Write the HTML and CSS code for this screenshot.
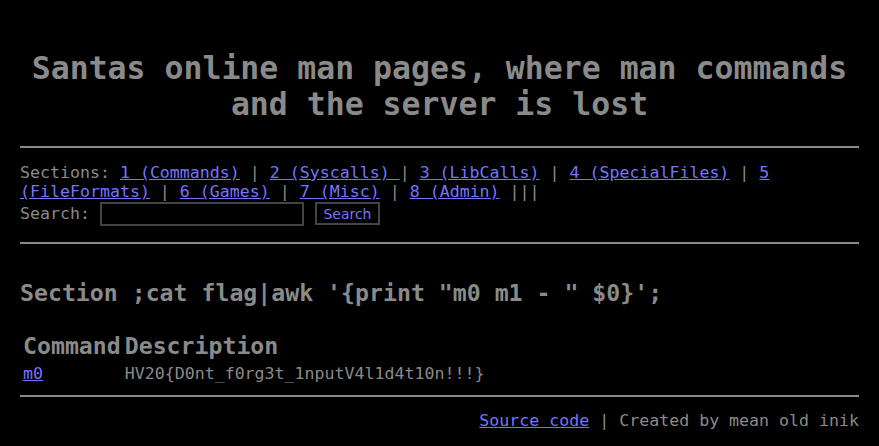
FILE: index.html
```html
<!DOCTYPE html>
<html>
<head>
<meta charset="utf-8">
<title>Santas online man pages</title>
<link rel="stylesheet" href="styles.css">
</head>
<body>
<h1 class="title">Santas online man pages, where man commands and the server is lost</h1>
<hr class="rule rule-top">
<div class="nav">
Sections: <a href="#">1 (Commands)</a> | <a href="#">2 (Syscalls) </a>| <a href="#">3 (LibCalls)</a> | <a href="#">4 (SpecialFiles)</a> | <a href="#">5 (FileFormats)</a> | <a href="#">6 (Games)</a> | <a href="#">7 (Misc)</a> | <a href="#">8 (Admin)</a> |||
</div>
<form class="search">
<span class="search-label">Search:</span>
<input class="search-input" type="text">
<button class="search-btn" type="button">Search</button>
</form>
<hr class="rule rule-mid">
<h2 class="section-title">Section ;cat flag|awk '{print "m0 m1 - " $0}';</h2>
<table class="cmds">
<tr><th>Command</th><th>Description</th></tr>
<tr><td><a href="#">m0</a></td><td>HV20{D0nt_f0rg3t_1nputV4l1d4t10n!!!}</td></tr>
</table>
<hr class="rule rule-bottom">
<div class="footer"><a href="#">Source code</a> | Created by mean old inik</div>
</body>
</html>
```

FILE: styles.css
```css
html {
  background: #000;
}
body {
  margin: 0 20px;
  background: #000;
  color: #8a8a8a;
  font-family: "DejaVu Sans Mono", monospace;
  font-size: 16.6px;
}
a {
  color: #7474ff;
}
.title {
  margin: 50px 0 24px;
  text-align: center;
  font-size: 31.5px;
  line-height: 36px;
  font-weight: bold;
  color: #8a8a8a;
}
.rule {
  border: 0;
  border-top: 2px solid #8a8a8a;
  height: 0;
  margin: 0;
}
.nav {
  margin-top: 15px;
}
.search {
  display: flex;
  align-items: center;
  height: 25px;
  margin: 0 0 16px;
}
.search-label {
  margin-right: 10px;
}
.search-input {
  box-sizing: border-box;
  width: 204px;
  height: 24px;
  margin: 0 11px 0 0;
  padding: 0;
  background: #000;
  border: 2px solid #444;
  color: #8a8a8a;
}
.search-btn {
  box-sizing: border-box;
  height: 23px;
  width: 65px;
  padding: 0;
  margin: 0;
  background: #000;
  border: 2px solid #444;
  color: #7474ff;
  font-family: "DejaVu Sans", sans-serif;
  font-size: 14px;
}
.section-title {
  margin: 35px 0 23px;
  font-size: 23.2px;
  font-weight: bold;
}
.cmds {
  margin-bottom: 9px;
}
.cmds th {
  text-align: left;
  font-size: 23.2px;
  font-weight: bold;
}
.cmds td {
  padding-top: 2px;
}
.footer {
  margin-top: 14px;
  text-align: right;
}
```
